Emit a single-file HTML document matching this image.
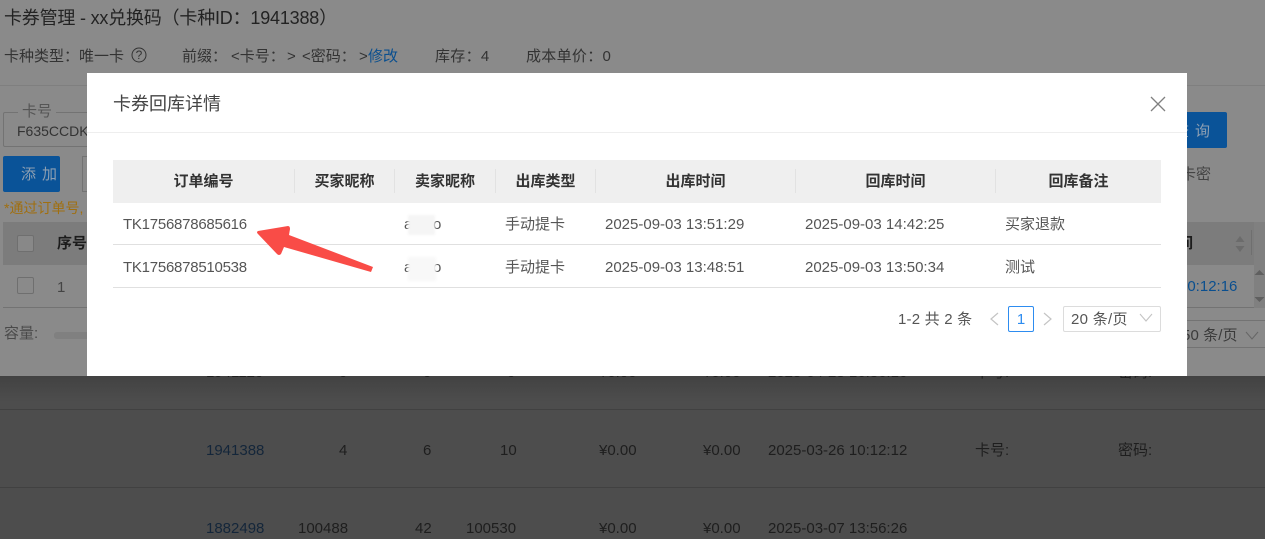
<!DOCTYPE html>
<html lang="zh">
<head>
<meta charset="utf-8">
<style>
html,body{margin:0;padding:0;width:1265px;height:539px;overflow:hidden;background:#8a8a8a}
body{position:relative;font-family:"Liberation Sans","Noto Sans CJK SC",sans-serif;font-size:15px;color:#2b2b2b}
.t{position:absolute;white-space:nowrap;line-height:20px}
.b{position:absolute;box-sizing:border-box}
#low{position:absolute;left:0;top:376px;width:1265px;height:163px;background:linear-gradient(#424242,#4d4d4d 26px);color:#1e1e1e}
#low .l{position:absolute;left:0;width:1265px;height:1px;background:#414141}
#modal{position:absolute;left:87px;top:73px;width:1100px;height:303px;background:#fff}
.th{position:absolute;top:87px;height:43px;line-height:44px;text-align:center;font-weight:bold;color:#333;font-size:15px}
.sep{position:absolute;top:96px;width:1px;height:24px;background:#e2e2e2}
.td{position:absolute;white-space:nowrap;line-height:20px;color:#555;font-size:15px}
.hl{position:absolute;left:26px;width:1048px;height:1px;background:#e0e0e0}
.blur{position:absolute;filter:blur(1px);background:#f5f5f5}
</style>
</head>
<body>
<div class="t" style="left:4px;top:7px;font-size:18px;line-height:22px;color:#232323;letter-spacing:-.2px">卡券管理 - xx兑换码（卡种ID：1941388）</div>
<div class="t" style="left:4px;top:47px;color:#333">卡种类型：唯一卡</div>
<svg class="b" style="left:131px;top:47px" width="16" height="16" viewBox="0 0 16 16"><circle cx="8" cy="8" r="7" fill="none" stroke="#333" stroke-width="1"/><text x="8" y="12" font-size="12" text-anchor="middle" fill="#333" font-family="Liberation Sans">?</text></svg>
<div class="t" style="left:182px;top:47px;color:#333">前缀：</div>
<div class="t" style="left:231px;top:47px;color:#333">&lt;卡号：</div>
<div class="t" style="left:287px;top:47px;color:#333">&gt;</div>
<div class="t" style="left:302px;top:47px;color:#333">&lt;密码：</div>
<div class="t" style="left:359px;top:47px;color:#333">&gt;</div>
<div class="t" style="left:368px;top:47px;color:#0a4f8f">修改</div>
<div class="t" style="left:435px;top:47px;color:#333;letter-spacing:.3px">库存：4</div>
<div class="t" style="left:526px;top:47px;color:#333;letter-spacing:.3px">成本单价：0</div>
<div class="b" style="left:0;top:85px;width:1265px;height:1px;background:#7f7f7f"></div>

<div class="b" style="left:3px;top:112px;width:90px;height:35px;border:1px solid #737373;border-radius:2px"></div>
<div class="t" style="left:18px;top:102px;background:#8a8a8a;padding:0 4px;color:#555">卡号</div>
<div class="t" style="left:17px;top:121px;color:#333;font-size:14px">F635CCDK</div>
<div class="b" style="left:3px;top:156px;width:57px;height:36px;background:#0a5398;border-radius:2px"></div>
<div class="t" style="left:21px;top:165px;color:#8d9fb2;letter-spacing:6px;font-size:15px">添加</div>
<div class="b" style="left:82px;top:156px;width:10px;height:36px;border:1px solid #737373"></div>
<div class="t" style="left:4px;top:198px;font-size:14px;color:#a06f10">*通过订单号,</div>

<div class="b" style="left:3px;top:222px;width:1261px;height:43px;background:#7c7c7c"></div>
<div class="b" style="left:3px;top:265px;width:1261px;height:43px;background:#8a8a8a;border-bottom:1px solid #737373"></div>
<div class="b" style="left:17px;top:235px;width:17px;height:17px;border:1px solid #6f6f6f;border-radius:2px;background:#888"></div>
<div class="b" style="left:17px;top:277px;width:17px;height:17px;border:1px solid #6f6f6f;border-radius:2px"></div>
<div class="t" style="left:57px;top:234px;font-weight:bold;color:#1c1c1c">序号</div>
<div class="t" style="left:57px;top:278px;color:#444">1</div>
<div class="t" style="left:4px;top:324px;color:#4a4a4a">容量:</div>
<div class="b" style="left:54px;top:332px;width:40px;height:7px;background:#808080;border-radius:3px"></div>

<div class="b" style="left:1187px;top:112px;width:40px;height:36px;background:#0a5398;border-radius:0 2px 2px 0"></div>
<div class="t" style="left:1174px;top:122px;color:#8d9fb2">查</div>
<div class="t" style="left:1195px;top:122px;color:#8d9fb2">询</div>
<div class="t" style="left:1181px;top:165px;color:#444">卡密</div>
<div class="t" style="left:1178px;top:234px;font-weight:bold;color:#1c1c1c">间</div>
<svg class="b" style="left:1234px;top:235px" width="12" height="18"><path d="M6 1l4.500 6h-9zM6 17l4.500-6h-9z" fill="#6b6b6b"/></svg>
<div class="b" style="left:1251px;top:230px;width:1px;height:25px;background:#6f6f6f"></div>
<div class="b" style="left:1254px;top:222px;width:11px;height:86px;background:#808080"></div>
<svg class="b" style="left:1254px;top:268px" width="11" height="36"><path d="M5.500 2l5 5H.5zM5.500 34l5-5H.5z" fill="#5f5f5f"/></svg>
<div class="t" style="left:1179px;top:277px;color:#0a4f8f">10:12:16</div>
<div class="b" style="left:1187px;top:320px;width:78px;height:28px;border-top:1px solid #737373;border-bottom:1px solid #737373"></div>
<div class="t" style="left:1182px;top:326px;color:#3a3a3a;letter-spacing:.1px">50 条/页</div>
<svg class="b" style="left:1245px;top:331px" width="14" height="10"><path d="M1 1l6 7 6-7" fill="none" stroke="#666"/></svg>

<div id="low">
  <div class="l" style="top:33px"></div>
  <div class="l" style="top:111px"></div>
  <div class="t" style="left:206px;top:-13px">1941120</div>
  <div class="t" style="left:339px;top:-13px">0</div>
  <div class="t" style="left:423px;top:-13px">0</div>
  <div class="t" style="left:507px;top:-13px">0</div>
  <div class="t" style="left:599px;top:-13px">¥0.00</div>
  <div class="t" style="left:703px;top:-13px">¥0.00</div>
  <div class="t" style="left:768px;top:-13px">2025-04-28 16:36:16</div>
  <div class="t" style="left:975px;top:-13px">卡号:</div>
  <div class="t" style="left:1118px;top:-13px">密码:</div>

  <div class="t" style="left:339px;top:65px">4</div>
  <div class="t" style="left:423px;top:65px">6</div>
  <div class="t" style="left:500px;top:65px">10</div>
  <div class="t" style="left:206px;top:65px;color:#14263a">1941388</div>
  <div class="t" style="left:599px;top:65px">¥0.00</div>
  <div class="t" style="left:703px;top:65px">¥0.00</div>
  <div class="t" style="left:768px;top:65px">2025-03-26 10:12:12</div>
  <div class="t" style="left:975px;top:65px">卡号:</div>
  <div class="t" style="left:1118px;top:65px">密码:</div>
  <div class="t" style="left:206px;top:143px;color:#14263a">1882498</div>
  <div class="t" style="left:298px;top:143px">100488</div>
  <div class="t" style="left:415px;top:143px">42</div>
  <div class="t" style="left:466px;top:143px">100530</div>
  <div class="t" style="left:599px;top:143px">¥0.00</div>
  <div class="t" style="left:703px;top:143px">¥0.00</div>
  <div class="t" style="left:768px;top:143px">2025-03-07 13:56:26</div>
</div>

<div id="modal">
  <div class="t" style="left:26px;top:20px;font-size:18px;line-height:22px;color:#444">卡券回库详情</div>
  <svg class="b" style="left:1063px;top:23px" width="16" height="16"><path d="M1 1l14 14M15 1L1 15" stroke="#808080" stroke-width="1.300" fill="none"/></svg>
  <div class="b" style="left:0;top:59px;width:1100px;height:1px;background:#eeeeee"></div>
  <div class="b" style="left:26px;top:87px;width:1048px;height:43px;background:#efefef"></div>
  <div class="th" style="left:26px;width:181px">订单编号</div>
  <div class="th" style="left:208px;width:99px">买家昵称</div>
  <div class="th" style="left:308px;width:100px">卖家昵称</div>
  <div class="th" style="left:409px;width:99px">出库类型</div>
  <div class="th" style="left:509px;width:199px">出库时间</div>
  <div class="th" style="left:709px;width:199px">回库时间</div>
  <div class="th" style="left:909px;width:165px">回库备注</div>
  <div class="sep" style="left:207px"></div>
  <div class="sep" style="left:307px"></div>
  <div class="sep" style="left:408px"></div>
  <div class="sep" style="left:508px"></div>
  <div class="sep" style="left:708px"></div>
  <div class="sep" style="left:908px"></div>

  <div class="td" style="left:36px;top:142px;letter-spacing:-.25px">TK1756878685616</div>
  <div class="td" style="left:317px;top:142px">a</div>
  <div class="td" style="left:346px;top:142px">o</div>
  <div class="blur" style="left:321px;top:142px;width:27px;height:20px"></div>
  <div class="td" style="left:418px;top:142px">手动提卡</div>
  <div class="td" style="left:518px;top:142px">2025-09-03 13:51:29</div>
  <div class="td" style="left:718px;top:142px">2025-09-03 14:42:25</div>
  <div class="td" style="left:918px;top:142px">买家退款</div>
  <div class="hl" style="top:171px"></div>

  <div class="td" style="left:36px;top:185px;letter-spacing:-.25px">TK1756878510538</div>
  <div class="td" style="left:317px;top:185px">a</div>
  <div class="td" style="left:346px;top:185px">o</div>
  <div class="blur" style="left:321px;top:184px;width:28px;height:24px;background:#f8f8f8"></div>
  <div class="td" style="left:418px;top:185px">手动提卡</div>
  <div class="td" style="left:518px;top:185px">2025-09-03 13:48:51</div>
  <div class="td" style="left:718px;top:185px">2025-09-03 13:50:34</div>
  <div class="td" style="left:918px;top:185px">测试</div>
  <div class="hl" style="top:214px"></div>

  <div class="td" style="left:811px;top:237px;letter-spacing:.2px">1-2 共 2 条</div>
  <svg class="b" style="left:901px;top:238px" width="12" height="16"><path d="M10 2L3 8l7 6" fill="none" stroke="#c4c4c4" stroke-width="1.200"/></svg>
  <div class="b" style="left:921px;top:233px;width:26px;height:26px;border:1px solid #2d8cf0;border-radius:2px;text-align:center;line-height:25px;color:#2d8cf0">1</div>
  <svg class="b" style="left:955px;top:238px" width="12" height="16"><path d="M2 2l7 6-7 6" fill="none" stroke="#c4c4c4" stroke-width="1.200"/></svg>
  <div class="b" style="left:976px;top:233px;width:98px;height:26px;border:1px solid #dcdcdc;border-radius:2px"></div>
  <div class="td" style="left:984px;top:237px;letter-spacing:.3px">20 条/页</div>
  <svg class="b" style="left:1052px;top:240px" width="14" height="10"><path d="M1 1l6 7 6-7" fill="none" stroke="#c4c4c4" stroke-width="1.100"/></svg>
</div>

<svg class="b" style="left:0;top:0;pointer-events:none" width="1265" height="539"><path d="M258 231 L288 226 Q290 226 290 229 L289 235 L373 267 L371 272 L284 247 L281 254 Q279 256 277 254 L258 234 Q256 232 258 231Z" fill="#f94c47"/></svg>
</body>
</html>
